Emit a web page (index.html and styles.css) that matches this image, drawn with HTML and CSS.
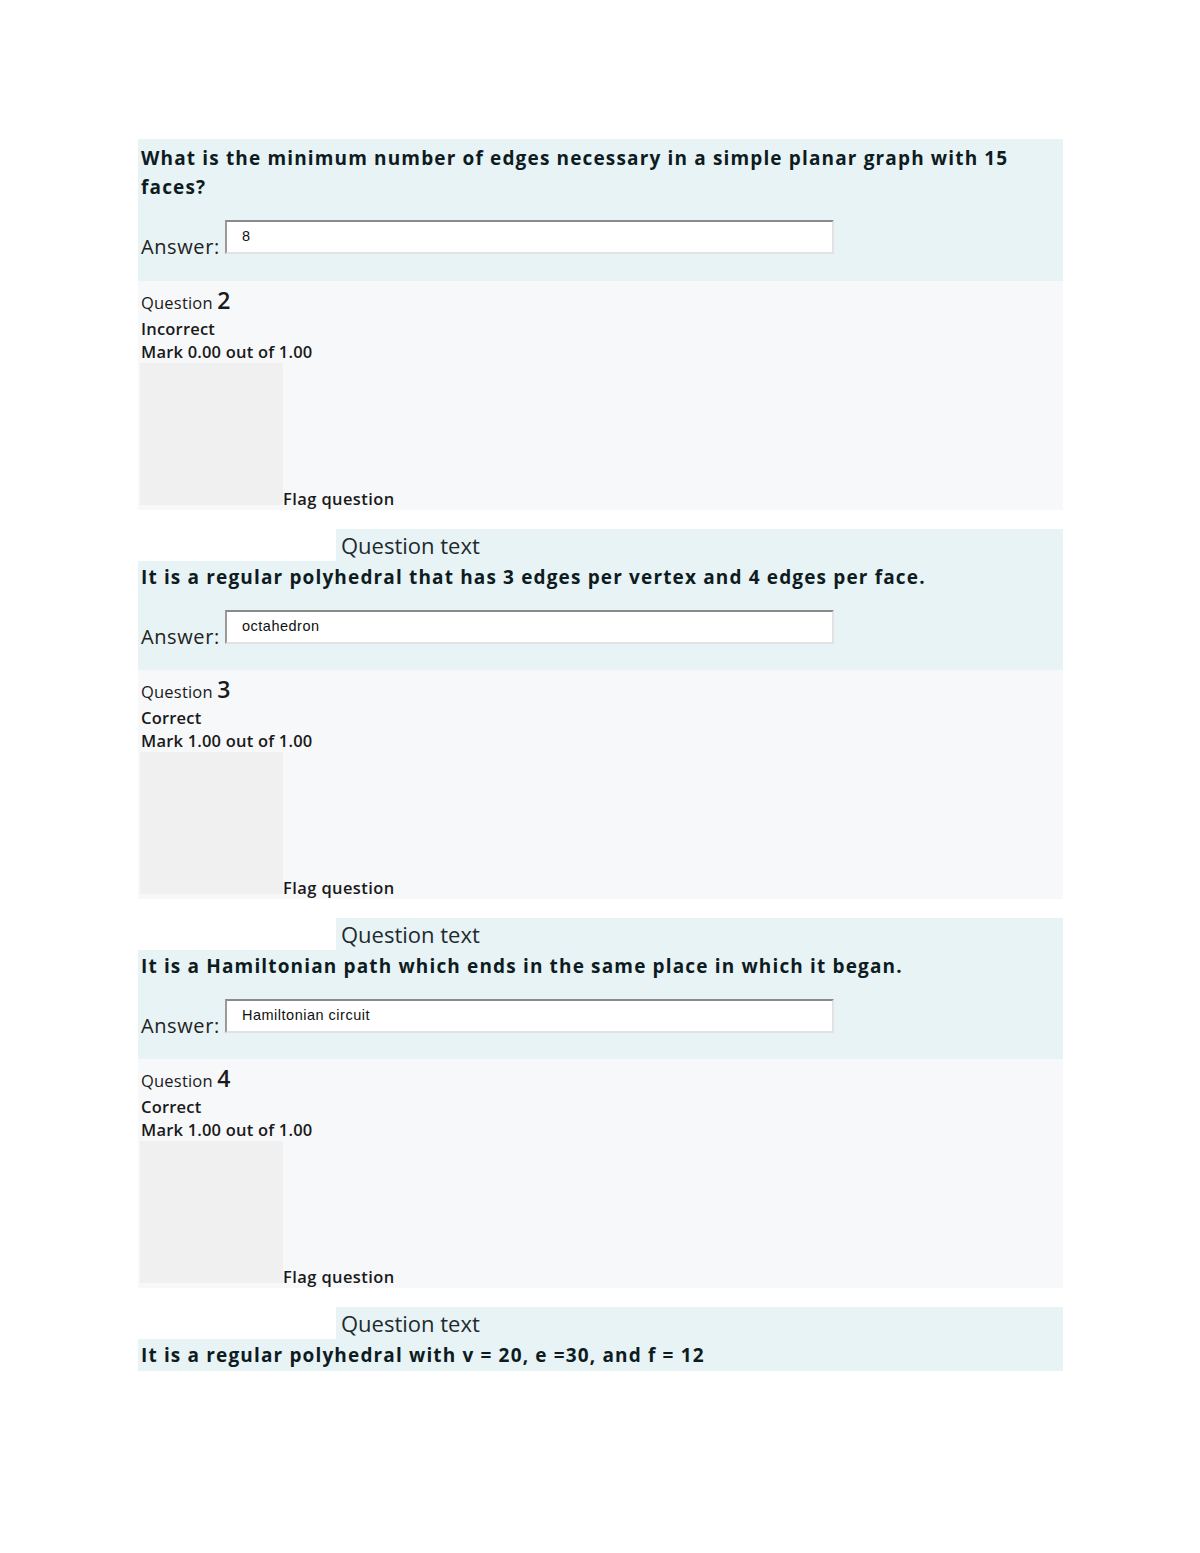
FILE: index.html
```html
<!DOCTYPE html>
<html>
<head>
<meta charset="utf-8">
<link rel="stylesheet" href="styles.css">
</head>
<body>
<div class="page">
  <section class="qbody first">
    <div class="prompt">What is the minimum number of edges necessary in a simple planar graph with 15 faces?</div>
    <div class="answer-row">
      <span class="answer-label">Answer:</span>
      <div class="answer-input">8</div>
    </div>
  </section>

  <section class="meta">
    <div class="qnum">Question <b>2</b></div>
    <div class="state">Incorrect</div>
    <div class="mark">Mark 0.00 out of 1.00</div>
    <div class="flag-row">
      <div class="flag-box"></div>
      <span class="flag-label">Flag question</span>
    </div>
  </section>
  <div class="gap"></div>

  <div class="qhead"><div class="qhead-space"></div><div class="qhead-label">Question text</div></div>
  <section class="qbody">
    <div class="prompt">It is a regular polyhedral that has 3 edges per vertex and 4 edges per face.</div>
    <div class="answer-row">
      <span class="answer-label">Answer:</span>
      <div class="answer-input">octahedron</div>
    </div>
  </section>

  <section class="meta">
    <div class="qnum">Question <b>3</b></div>
    <div class="state">Correct</div>
    <div class="mark">Mark 1.00 out of 1.00</div>
    <div class="flag-row">
      <div class="flag-box"></div>
      <span class="flag-label">Flag question</span>
    </div>
  </section>
  <div class="gap"></div>

  <div class="qhead"><div class="qhead-space"></div><div class="qhead-label">Question text</div></div>
  <section class="qbody">
    <div class="prompt">It is a Hamiltonian path which ends in the same place in which it began.</div>
    <div class="answer-row">
      <span class="answer-label">Answer:</span>
      <div class="answer-input">Hamiltonian circuit</div>
    </div>
  </section>

  <section class="meta">
    <div class="qnum">Question <b>4</b></div>
    <div class="state">Correct</div>
    <div class="mark">Mark 1.00 out of 1.00</div>
    <div class="flag-row">
      <div class="flag-box"></div>
      <span class="flag-label">Flag question</span>
    </div>
  </section>
  <div class="gap"></div>

  <div class="qhead"><div class="qhead-space"></div><div class="qhead-label">Question text</div></div>
  <section class="qbody last">
    <div class="prompt">It is a regular polyhedral with v = 20, e =30, and f = 12</div>
  </section>
</div>
</body>
</html>
```

FILE: styles.css
```css
html, body {
  margin: 0;
  padding: 0;
  background: #ffffff;
}

.page {
  width: 925px;
  margin-left: 138px;
  padding-top: 139px;
  font-family: "Open Sans", "Noto Sans", sans-serif;
  color: #1c1c1c;
}

.qbody {
  background: #e7f3f5;
  padding: 2px 3px 26px 3px;
}

.qbody.first {
  padding-top: 5px;
  padding-bottom: 27px;
}

.qbody.last {
  padding-bottom: 1px;
}

.prompt {
  font-size: 19px;
  font-weight: 700;
  line-height: 29px;
  letter-spacing: 1.15px;
  color: #0e1c22;
  padding-right: 20px;
}

.answer-row {
  display: flex;
  align-items: flex-end;
  margin-top: 18px;
}

.answer-label {
  font-size: 20px;
  line-height: 24px;
  margin-bottom: -5px;
  color: #222;
  width: 84px;
  letter-spacing: 0.6px;
  flex: none;
}

.answer-input {
  box-sizing: border-box;
  width: 609px;
  height: 34px;
  background: #ffffff;
  border-top: 2px solid #8a8a8a;
  border-left: 2px solid #9a9a9a;
  border-right: 2px solid #e2e2e2;
  border-bottom: 2px solid #e2e2e2;
  padding: 5px 0 0 15px;
  font-family: "Liberation Sans", Arial, sans-serif;
  font-size: 14.5px;
  line-height: 18px;
  color: #111;
  letter-spacing: 0.5px;
}

.meta {
  background: #f7f8fa;
  padding: 5px 3px 5px 3px;
  font-size: 16.5px;
  color: #1a1a1a;
  letter-spacing: 0.2px;
}

.qnum {
  line-height: 28px;
}

.qnum b {
  font-size: 23px;
  font-weight: 600;
  letter-spacing: 0;
}

.state {
  line-height: 24px;
  font-weight: 600;
}

.mark {
  line-height: 22px;
  font-weight: 600;
}

.flag-row {
  display: flex;
  align-items: flex-end;
}

.flag-box {
  width: 143px;
  height: 142px;
  margin-left: -1px;
  background: #f0f0f0;
  flex: none;
}

.flag-label {
  font-weight: 600;
  line-height: 20px;
  margin-bottom: -4px;
  letter-spacing: 0.4px;
}

.gap {
  height: 19px;
}

.qhead {
  display: flex;
  height: 32px;
}

.qhead-space {
  width: 198px;
  flex: none;
}

.qhead-label {
  flex: 1;
  background: #e7f3f5;
  padding-left: 5px;
  font-size: 22px;
  line-height: 33px;
  color: #1e2a2e;
  letter-spacing: 0;
}
```
